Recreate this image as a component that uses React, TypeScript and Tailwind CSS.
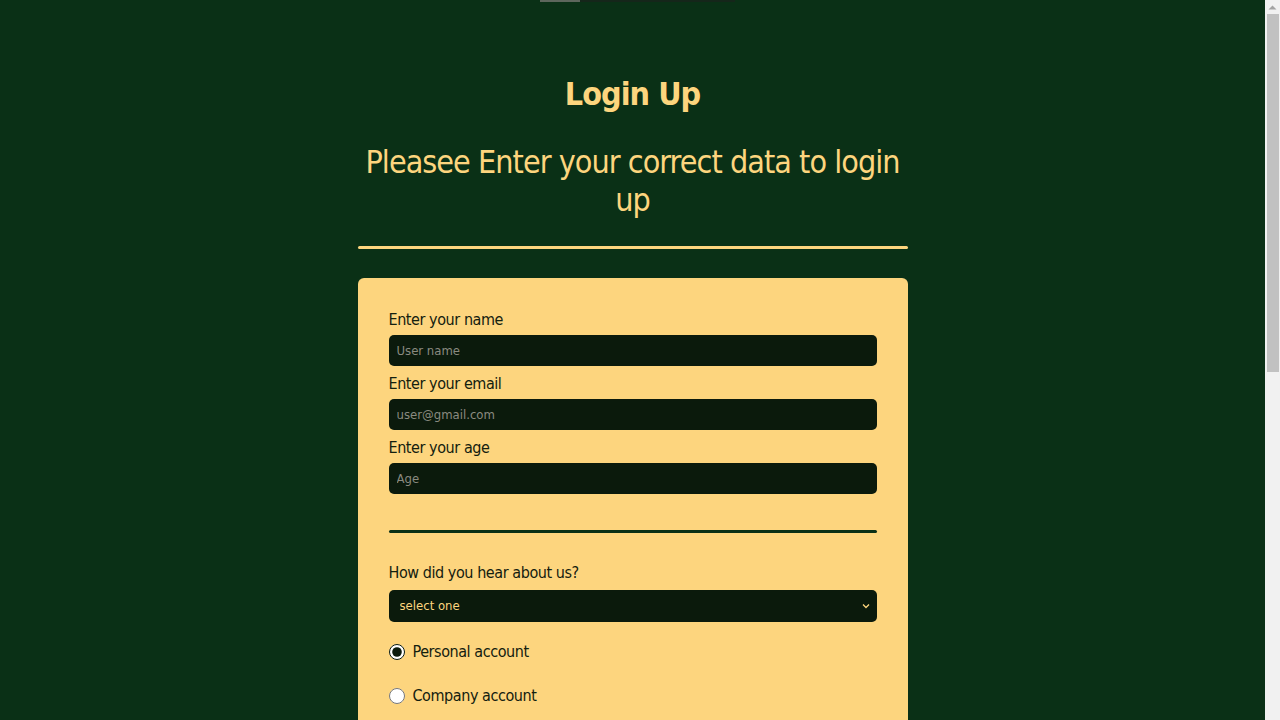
import React from 'react';

const font = { fontFamily: '"DejaVu Sans Condensed", "DejaVu Sans", sans-serif' };

const fields = [
  { label: 'Enter your name', placeholder: 'User name', type: 'text' },
  { label: 'Enter your email', placeholder: 'user@gmail.com', type: 'email' },
  { label: 'Enter your age', placeholder: 'Age', type: 'number' },
];

const ScrollBar: React.FC = () => (
  <div className="flex h-[720px] w-[15px] shrink-0 flex-col bg-[#f1f1f1]">
    <div className="flex h-[14px] items-center justify-center">
      <svg width="9" height="5" viewBox="0 0 9 5">
        <path d="M0.5 4.5 L4.5 0.5 L8.5 4.5 Z" fill="#a3a3a3" />
      </svg>
    </div>
    <div className="mx-auto h-[358px] w-[12px] bg-[#c1c1c1]" />
  </div>
);

const App: React.FC = () => {
  return (
    <div className="flex h-[720px] overflow-hidden bg-[#0a3016] tracking-[-0.027em] text-[#fdd57e]" style={font}>
      <div className="min-w-0 flex-1">
        <div className="flex h-[2px]">
          <div className="ml-[540px] w-[40px] bg-[#5d665c]" />
          <div className="w-[155px] bg-[#15261a]" />
        </div>
        <div className="mx-auto w-[550px] pt-[72px] pb-[40px]">
          <h1 className="text-center text-[32px] font-bold leading-[40px] tracking-[-0.03em]">Login Up</h1>
          <h2 className="mt-[29px] text-center text-[32px] leading-[38px] tracking-[-0.03em]">
            Pleasee Enter your correct data to login up
          </h2>
          <div className="mt-[27px] h-[3px] rounded-full bg-[#fdd57e]" />

          <form className="mt-[29px] min-h-[1090px] rounded-md bg-[#fdd57e] px-[31px] pt-[32px] pb-8 text-[#13200f]">
            {fields.map((f) => (
              <div key={f.label}>
                <label className="mb-[5px] block text-[16px] leading-[20px]">{f.label}</label>
                <input
                  type={f.type}
                  placeholder={f.placeholder}
                  className="mb-[8px] block h-[31px] w-full rounded-[5px] bg-[#0b1a0c] px-2 text-[13px] tracking-normal text-[#fdd57e] outline-none placeholder:text-[#8a8a80]"
                />
              </div>
            ))}
            <div className="mt-[36px] h-[3px] rounded-full bg-[#0a3016]" />

            <label className="mt-[30px] mb-[7px] block text-[16px] leading-[20px]">
              How did you hear about us?
            </label>
            <div className="relative">
              <select className="block h-[32px] w-full appearance-none rounded-[5px] bg-[#0b1a0c] px-[11px] text-[13px] tracking-normal text-[#fdd57e] outline-none">
                <option>select one</option>
                <option>Friends</option>
                <option>Social media</option>
              </select>
              <svg
                className="pointer-events-none absolute right-[7px] top-[13px]"
                width="8"
                height="6"
                viewBox="0 0 8 6"
              >
                <path d="M1 1.5 L4 4.5 L7 1.5" fill="none" stroke="#fdd57e" strokeWidth="1.3" />
              </svg>
            </div>

            <div className="mt-[20px] flex flex-col gap-[24px]">
              <label className="flex items-center gap-2 text-[16px] leading-[20px]">
                <input type="radio" name="acc" defaultChecked className="m-0 h-4 w-4 accent-[#0b1a0c]" />
                Personal account
              </label>
              <label className="flex items-center gap-2 text-[16px] leading-[20px]">
                <input type="radio" name="acc" className="m-0 h-4 w-4 accent-[#0b1a0c]" />
                Company account
              </label>
            </div>
          </form>
        </div>
      </div>
      <ScrollBar />
    </div>
  );
};

export default App;
